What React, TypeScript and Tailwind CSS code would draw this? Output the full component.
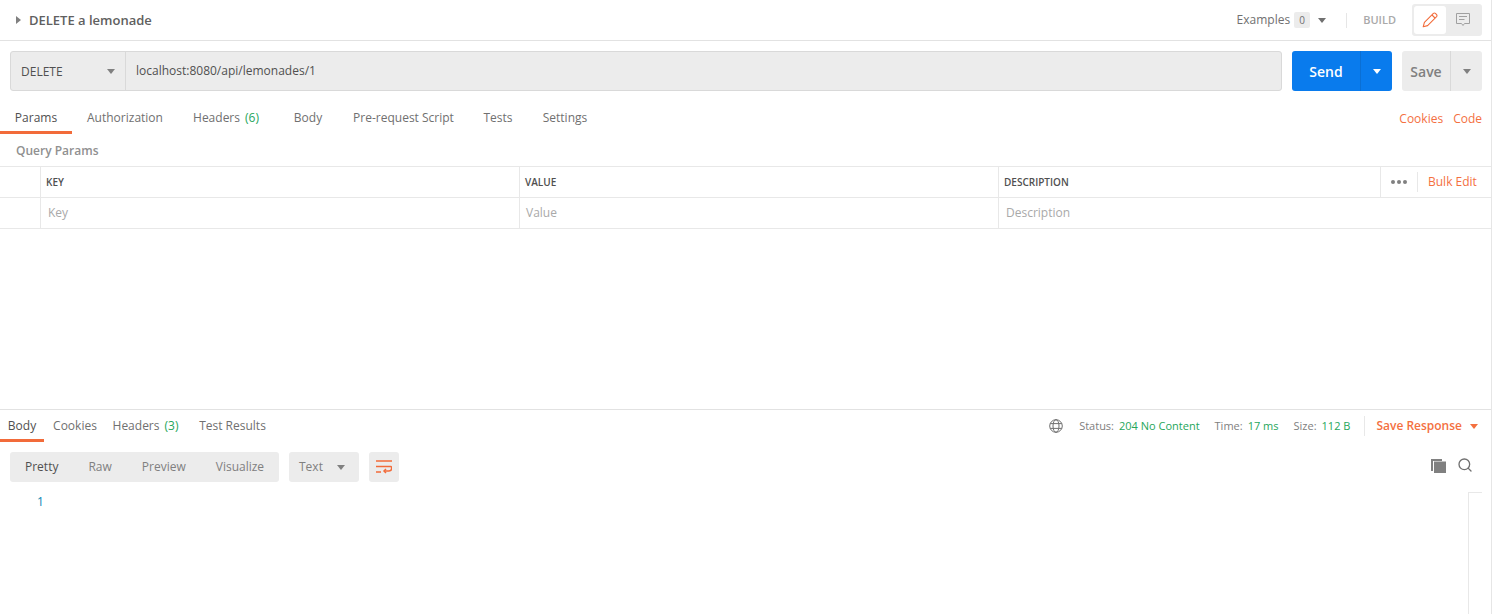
import { Search } from "lucide-react";

const caret = "w-0 h-0 border-x-[4px] border-x-transparent border-t-[5px]";

function Tab({ label, count, active, className }: { label: string; count?: string; active?: boolean; className: string }) {
  return (
    <div className={`h-full flex items-center justify-center border-b-[3px] pt-[3px] ${active ? "border-[#f26b3a] text-[#505050]" : "border-transparent text-[#707070]"} ${className}`}>
      {label}
      {count && <span className="ml-[5px] text-[#26a65b]">{count}</span>}
    </div>
  );
}

function HeadCell({ label, className }: { label: string; className: string }) {
  return (
    <div className={`h-full flex items-center pl-[5px] pt-px border-r border-[#e8e8e8] text-[10px] font-semibold text-[#505050] ${className}`}>
      {label}
    </div>
  );
}

function InputCell({ label, className }: { label: string; className: string }) {
  return (
    <div className={`h-full flex items-center pl-[7px] text-[12px] text-[#a9a9a9] ${className}`}>
      {label}
    </div>
  );
}

export default function App() {
  return (
    <div className="w-[1492px] h-[614px] overflow-hidden bg-white border-r border-[#e6e6e6] flex flex-col text-[12px] text-[#505050] font-['Open_Sans',sans-serif]">
      {/* request name */}
      <div className="h-[41px] shrink-0 border-b border-[#e2e2e2] flex items-center pl-4 pr-[9px]">
        <div className="w-0 h-0 border-y-[4px] border-y-transparent border-l-[5px] border-l-[#808080]" />
        <div className="ml-2 pt-px text-[13px] font-semibold text-[#606060]">DELETE a lemonade</div>
        <div className="ml-auto flex items-center">
          <span className="text-[#707070]">Examples</span>
          <span className="ml-1 w-4 h-4 rounded-[2px] bg-[#ececec] flex items-center justify-center text-[10px] text-[#707070]">0</span>
          <div className={`ml-2 ${caret} border-t-[#707070]`} />
          <div className="ml-[20px] w-px h-[15px] bg-[#e6e6e6]" />
          <span className="ml-[16px] text-[11px] font-semibold text-[#a9a9a9]">BUILD</span>
          <div className="ml-[16px] w-[70px] h-8 rounded-[3px] bg-[#ececec] p-[2px] flex">
            <div className="w-8 h-7 rounded-[3px] bg-white flex items-center justify-center">
              <svg width="16" height="16" viewBox="0 0 16 16" fill="none" stroke="#f26b3a" strokeWidth="1.1" strokeLinejoin="round">
                <path d="M1.2 14.8 L2.4 10.4 L11.4 1.4 Q12.4 .6 13.4 1.4 L14.6 2.6 Q15.4 3.6 14.6 4.6 L5.6 13.6 Z" />
                <path d="M10 3 L13 6" />
              </svg>
            </div>
            <div className="flex-1 flex items-center justify-center">
              <svg width="14" height="14" viewBox="0 0 14 14" fill="none" stroke="#a0a0a0" strokeWidth="1">
                <path d="M.5 .5 H13.5 V10.5 H8.5 L7 12.5 L5.5 10.5 H.5 Z" />
                <path d="M3 3.5 H11 M3 6.5 H8.5" />
              </svg>
            </div>
          </div>
        </div>
      </div>

      {/* url row */}
      <div className="h-10 mt-[10px] shrink-0 flex pl-[10px] pr-[9px]">
        <div className="flex-1 flex rounded-[3px] bg-[#ececec] border border-[#d9d9d9]">
          <div className="w-[115px] flex items-center pl-[10px] pr-[10px] border-r border-[#d9d9d9] text-[#505050]">
            <span className="pt-px">DELETE</span>
            <div className={`ml-auto ${caret} border-t-[#808080]`} />
          </div>
          <div className="flex-1 flex items-center pl-[10px] text-[#505050]">localhost:8080/api/lemonades/1</div>
        </div>
        <div className="ml-[10px] w-[100px] flex rounded-[3px] bg-[#097bed] text-white">
          <div className="w-[69px] flex items-center justify-center text-[14px] font-semibold border-r border-[#0a6fd4]">Send</div>
          <div className="flex-1 flex items-center justify-center">
            <div className={`${caret} border-t-white`} />
          </div>
        </div>
        <div className="ml-[10px] w-20 flex rounded-[3px] bg-[#ececec] text-[#808080]">
          <div className="w-[49px] flex items-center justify-center text-[14px] font-semibold border-r border-[#d9d9d9]">Save</div>
          <div className="flex-1 flex items-center justify-center">
            <div className={`${caret} border-t-[#808080]`} />
          </div>
        </div>
      </div>

      {/* request tabs */}
      <div className="h-[33px] mt-[10px] shrink-0 flex items-center pr-[9px]">
        <Tab label="Params" active className="w-[72px]" />
        <Tab label="Authorization" className="w-[106px]" />
        <Tab label="Headers" count="(6)" className="w-[94px] ml-[1px]" />
        <Tab label="Body" className="w-[30px] ml-[20px]" />
        <Tab label="Pre-request Script" className="w-[101px] ml-[30px]" />
        <Tab label="Tests" className="w-[30px] ml-[29px]" />
        <Tab label="Settings" className="w-[46px] ml-[29px]" />
        <div className="ml-auto flex gap-[10px] pt-[3px] text-[#f4703f]">
          <span>Cookies</span>
          <span>Code</span>
        </div>
      </div>

      {/* params table */}
      <div className="h-[32px] shrink-0 flex items-center pl-4 pt-[2px] text-[12px] font-semibold text-[#909090]">Query Params</div>
      <div className="shrink-0 border-t border-[#e8e8e8]">
        <div className="h-[31px] flex items-center border-b border-[#e8e8e8]">
          <HeadCell label="" className="w-[41px]" />
          <HeadCell label="KEY" className="w-[479px]" />
          <HeadCell label="VALUE" className="w-[479px]" />
          <HeadCell label="DESCRIPTION" className="w-[382px]" />
          <div className="flex-1 flex items-center pl-[10px]">
            <div className="flex gap-[2px]">
              <div className="w-[4px] h-[4px] rounded-full bg-[#808080]" />
              <div className="w-[4px] h-[4px] rounded-full bg-[#808080]" />
              <div className="w-[4px] h-[4px] rounded-full bg-[#808080]" />
            </div>
            <div className="ml-[10px] w-px h-[20px] bg-[#e8e8e8]" />
            <span className="ml-[10px] text-[#f4703f]">Bulk Edit</span>
          </div>
        </div>
        <div className="h-[31px] flex items-center border-b border-[#e8e8e8]">
          <InputCell label="" className="w-[41px] border-r border-[#e8e8e8]" />
          <InputCell label="Key" className="w-[479px] border-r border-[#e8e8e8]" />
          <InputCell label="Value" className="w-[479px] border-r border-[#e8e8e8] !pl-[6px]" />
          <InputCell label="Description" className="w-[382px]" />
        </div>
      </div>

      {/* response */}
      <div className="mt-[180px] flex-1 border-t border-[#e2e2e2] flex flex-col min-h-0">
        <div className="h-[32px] shrink-0 flex items-center pr-[12px]">
          <Tab label="Body" active className="w-[44px]" />
          <Tab label="Cookies" className="w-[44px] ml-[9px]" />
          <Tab label="Headers" count="(3)" className="w-[67px] ml-[15px]" />
          <Tab label="Test Results" className="w-[67px] ml-[20px]" />
          <div className="ml-auto flex items-center text-[11px] text-[#808080]">
            <svg width="14" height="14" viewBox="0 0 14 14" fill="none" stroke="#707070" strokeWidth="1">
              <circle cx="7" cy="7" r="6.3" />
              <ellipse cx="7" cy="7" rx="3" ry="6.3" />
              <path d="M1.2 4.6 H12.8 M1.2 9.4 H12.8" />
            </svg>
            <span className="ml-[16px]">Status:</span>
            <span className="ml-[5px] text-[#26a65b]">204 No Content</span>
            <span className="ml-[15px]">Time:</span>
            <span className="ml-[5px] text-[#26a65b]">17 ms</span>
            <span className="ml-[15px]">Size:</span>
            <span className="ml-[5px] text-[#26a65b]">112 B</span>
            <div className="ml-[14px] w-px h-5 bg-[#e8e8e8]" />
            <span className="ml-[11px] text-[12px] text-[#f4703f] font-semibold">Save Response</span>
            <div className={`ml-[8px] mr-px ${caret} border-t-[#f4703f]`} />
          </div>
        </div>

        <div className="h-[30px] mt-[10px] shrink-0 flex pl-[10px] pr-[18px]">
          <div className="w-[269px] rounded-[3px] bg-[#ececec] flex items-center text-[#808080]">
            <span className="ml-[15px] text-[#505050]">Pretty</span>
            <span className="ml-[30px]">Raw</span>
            <span className="ml-[30px]">Preview</span>
            <span className="ml-[30px]">Visualize</span>
          </div>
          <div className="ml-[10px] w-[70px] rounded-[3px] bg-[#ececec] flex items-center px-[10px] text-[#808080]">
            Text
            <div className={`ml-auto mr-[4px] ${caret} border-t-[#808080]`} />
          </div>
          <div className="ml-[10px] w-[30px] rounded-[3px] bg-[#ececec] flex items-center justify-center">
            <svg width="16" height="14" viewBox="0 0 16 14" fill="none" stroke="#f26b3a" strokeWidth="1.5">
              <path d="M0 1 H16 M0 6.5 H15 Q15.6 6.5 15.6 8.5 Q15.6 11 13 11 H8 M0 12 H5" />
              <path d="M10 9 L8 11 L10 13" />
            </svg>
          </div>
          <div className="ml-auto flex items-center gap-[11px] pb-[4px]">
            <svg width="15" height="15" viewBox="0 0 15 15" fill="#808080">
              <path d="M0 1 H11 V3 H2 V13 H0 Z" />
              <path d="M3 3.5 H15 V15 H3 Z" />
            </svg>
            <Search size={16} strokeWidth={2} className="text-[#707070]" />
          </div>
        </div>

        <div className="flex-1 mt-[10px] flex min-h-0">
          <div className="pl-[37px] pt-[2px] text-[#0b86b4] text-[12px] leading-[16px]">1</div>
          <div className="ml-auto mr-[9px] w-[14px] border-l border-t border-[#e8e8e8]" />
        </div>
      </div>
    </div>
  );
}
